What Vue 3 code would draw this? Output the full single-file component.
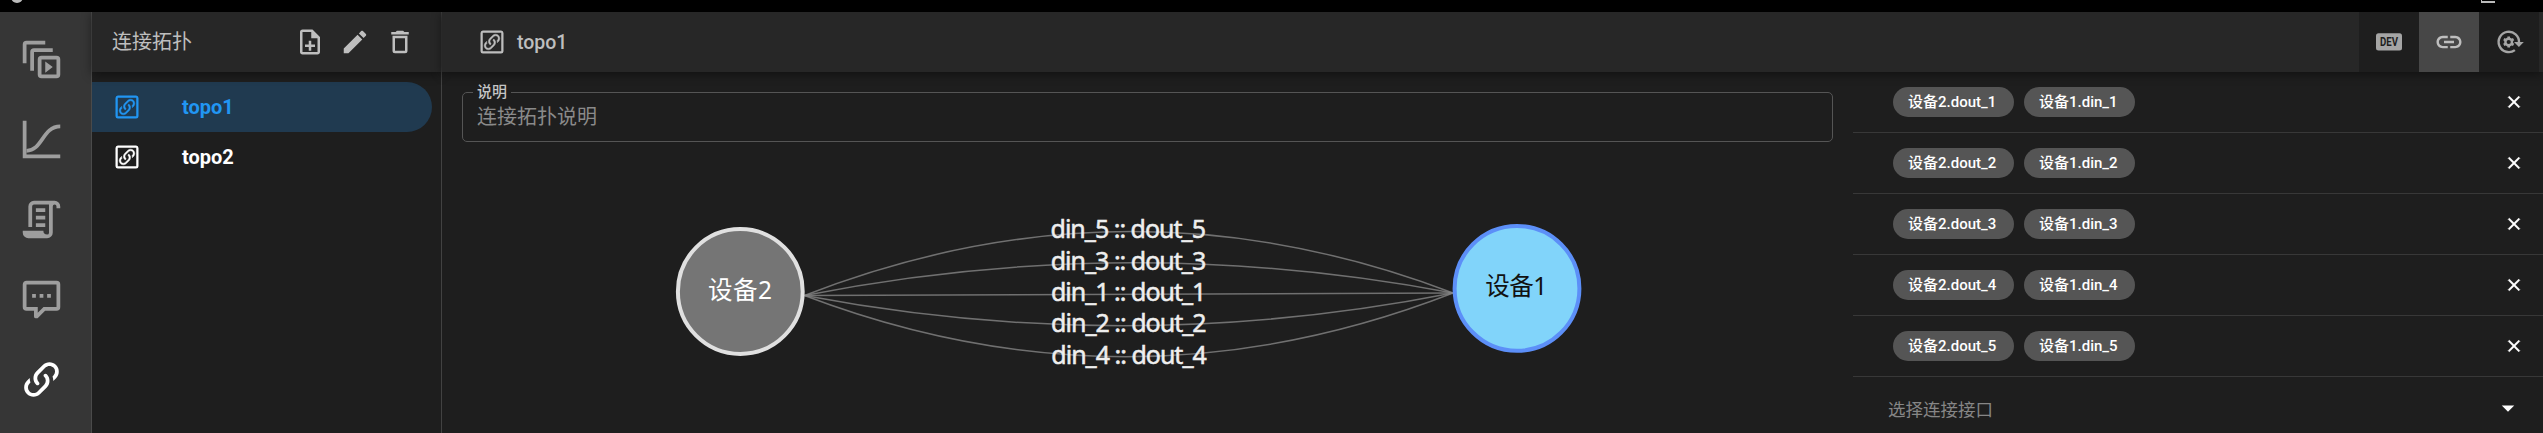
<script setup>
const link = 'M10.59,13.41C11,13.8 11,14.44 10.59,14.83C10.2,15.22 9.56,15.22 9.17,14.83C7.22,12.88 7.22,9.71 9.17,7.76V7.76L12.71,4.22C14.66,2.27 17.83,2.27 19.78,4.22C21.73,6.17 21.73,9.34 19.78,11.29L18.29,12.78C18.3,11.96 18.17,11.14 17.89,10.36L18.36,9.88C19.54,8.71 19.54,6.81 18.36,5.64C17.19,4.46 15.29,4.46 14.12,5.64L10.59,9.17C9.41,10.34 9.41,12.24 10.59,13.41M13.41,9.17C13.8,8.78 14.44,8.78 14.83,9.17C16.78,11.12 16.78,14.29 14.83,16.24V16.24L11.29,19.78C9.34,21.73 6.17,21.73 4.22,19.78C2.27,17.83 2.27,14.66 4.22,12.71L5.71,11.22C5.7,12.04 5.83,12.86 6.11,13.65L5.64,14.12C4.46,15.29 4.46,17.19 5.64,18.36C6.81,19.54 8.71,19.54 9.88,18.36L13.41,14.83C14.59,13.66 14.59,11.76 13.41,10.59C13,10.2 13,9.56 13.41,9.17Z'
const frame = 'M19.3 2.8H4.7A2 2 0 0 0 2.8 4.7V19.3A2 2 0 0 0 4.7 21.2H19.3A2 2 0 0 0 21.2 19.3V4.7A2 2 0 0 0 19.3 2.8M19.4 19.4H4.6V4.6H19.4Z'
const rail = [
  { d: 'M4 2A2 2 0 0 0 2 4V14H4V4H14V2M8 6A2 2 0 0 0 6 8V18H8V8H18V6M20 12V20H12V12H20M20 10H12A2 2 0 0 0 10 12V20A2 2 0 0 0 12 22H20A2 2 0 0 0 22 20V12A2 2 0 0 0 20 10M14 13V19L18 16L14 13Z' },
  { d: 'M2 2H4V20H22V22H2Z', curve: 'M4 18C12.5 18 12.5 5 22 5' },
  { d: 'M15,20A1,1 0 0,0 16,19V4H8A1,1 0 0,0 7,5V16H5V5A3,3 0 0,1 8,2H19A3,3 0 0,1 22,5V6H20V5A1,1 0 0,0 19,4A1,1 0 0,0 18,5V9L18,19A3,3 0 0,1 15,22H5A3,3 0 0,1 2,19V18H13A2,2 0 0,0 15,20M9,6H14V8H9V6M9,10H14V12H9V10M9,14H14V16H9V14Z' },
  { d: 'M9,22A1,1 0 0,1 8,21V18H4A2,2 0 0,1 2,16V4C2,2.89 2.9,2 4,2H20A2,2 0 0,1 22,4V16A2,2 0 0,1 20,18H13.9L10.2,21.71C10,21.9 9.75,22 9.5,22V22H9M10,16V19.08L13.08,16H20V4H4V16H10M17,11H15V9H17V11M13,11H11V9H13V11M9,11H7V9H9V11Z' },
  { d: link, active: true },
]
const actions = [
  'M13 11h-2v3H8v2h3v3h2v-3h3v-2h-3zm1-9H6c-1.1 0-2 .9-2 2v16c0 1.1.89 2 1.99 2H18c1.1 0 2-.9 2-2V8l-6-6zm4 18H6V4h7v5h5v11z',
  'M20.71,7.04C21.1,6.65 21.1,6 20.71,5.63L18.37,3.29C18,2.9 17.35,2.9 16.96,3.29L15.12,5.12L18.87,8.87M3,17.25V21H6.75L17.81,9.93L14.06,6.18L3,17.25Z',
  'M6,19A2,2 0 0,0 8,21H16A2,2 0 0,0 18,19V7H6V19M8,9H16V19H8V9M15.5,4L14.5,3H9.5L8.5,4H5V6H19V4H15.5Z',
]
const topos = [{ name: 'topo1', active: true }, { name: 'topo2' }]
const edges = [
  { n: 5, c: 169, y: 238.4, x: 0 },
  { n: 3, c: 231.5, y: 269.7, x: 0.2 },
  { n: 1, c: 294, y: 301, x: 0.4 },
  { n: 2, c: 357, y: 332.3, x: 0.6 },
  { n: 4, c: 419, y: 363.6, x: 0.8 },
]
</script>

<template>
  <div class="app">
    <div class="titlebar">
      <i class="logo"></i><i class="winbtn"></i>
    </div>
    <div class="main">
      <nav class="rail">
        <svg v-for="(r, i) in rail" :key="i" viewBox="0 0 24 24" :class="{ on: r.active }">
          <path :d="r.d" />
          <path v-if="r.curve" class="curve" :d="r.curve" />
        </svg>
      </nav>
      <aside class="side">
        <header class="bar side-bar">
          <span class="title">连接拓扑</span>
          <svg v-for="(a, i) in actions" :key="i" class="ic" viewBox="0 0 24 24"><path :d="a" /></svg>
        </header>
        <div class="list">
          <div v-for="t in topos" :key="t.name" class="item" :class="{ on: t.active }">
            <svg class="ic" viewBox="0 0 24 24"><path :d="frame" /><path class="inner" transform="translate(3.84 3.84) scale(.68)" :d="link" /></svg>
            <span>{{ t.name }}</span>
          </div>
        </div>
      </aside>
      <section class="content">
        <header class="bar top-bar">
          <svg class="ic" viewBox="0 0 24 24"><path :d="frame" /><path class="inner" transform="translate(3.84 3.84) scale(.68)" :d="link" /></svg>
          <span class="name">topo1</span>
          <div class="tabs">
            <div class="tab">
              <svg class="ic" viewBox="0 0 30 30">
                <rect x="2" y="6.2" width="26" height="17.2" rx="2.5" />
                <text class="dev" x="6" y="19" textLength="18" lengthAdjust="spacingAndGlyphs">DEV</text>
              </svg>
            </div>
            <div class="tab on">
              <svg class="ic" viewBox="0 0 24 24"><path d="M3.9 12c0-1.71 1.39-3.1 3.1-3.1h4V7H7c-2.76 0-5 2.24-5 5s2.24 5 5 5h4v-1.9H7c-1.71 0-3.1-1.39-3.1-3.1zM8 13h8v-2H8v2zm9-6h-4v1.9h4c1.71 0 3.1 1.39 3.1 3.1s-1.39 3.1-3.1 3.1h-4V17h4c2.76 0 5-2.24 5-5s-2.24-5-5-5z" /></svg>
            </div>
            <div class="tab">
              <svg class="ic" viewBox="0 0 30 30">
                <path class="ring" d="M20.9 23.1A10.2 10.2 0 1 1 25 15.5" />
                <path d="M20 15H29.8L24.9 20Z" />
                <circle class="gear" cx="14.7" cy="15" r="3.3" />
                <path class="teeth" d="M14.7 9.4V12M14.7 18V20.6M9.8 12.2L12.1 13.5M17.3 16.5L19.6 17.8M9.8 17.8L12.1 16.5M17.3 13.5L19.6 12.2" />
              </svg>
            </div>
          </div>
        </header>
        <div class="body">
          <div class="canvas">
            <fieldset class="field"><legend>说明</legend><span>连接拓扑说明</span></fieldset>
            <svg class="graph" viewBox="442 155 1411 278">
              <path v-for="e in edges" :key="e.n" class="edge" :d="`M804.5 295.5Q1128.7 ${e.c} 1453 293`" />
              <circle class="n2" cx="740.3" cy="291.5" r="62.4" />
              <circle class="n1" cx="1517" cy="288.4" r="62.4" />
              <text class="t2" x="708" y="298.6" textLength="64">设备2</text>
              <text class="t1" x="1485.2" y="295" textLength="62">设备1</text>
              <text v-for="e in edges" :key="e.n" class="lbl" :x="1050.5 + e.x" :y="e.y" textLength="155.5">din_{{ e.n }} :: dout_{{ e.n }}</text>
            </svg>
          </div>
          <div class="links">
            <div v-for="n in 5" :key="n" class="row">
              <span class="chip c1">设备2.dout_{{ n }}</span><span class="chip c2">设备1.din_{{ n }}</span>
              <svg class="x" viewBox="0 0 24 24"><path d="M19,6.41L17.59,5L12,10.59L6.41,5L5,6.41L10.59,12L5,17.59L6.41,19L12,13.41L17.59,19L19,17.59L13.41,12L19,6.41Z" /></svg>
            </div>
            <div class="select"><span>选择连接接口</span><svg viewBox="0 0 24 24"><path d="M7,10L12,15L17,10H7Z" /></svg></div>
          </div>
        </div>
      </section>
    </div>
  </div>
</template>

<style>
body { background: #1e1e1e; overflow: hidden; }
</style>
<style scoped>
* { box-sizing: border-box; }
.app { width: 2543px; height: 433px; overflow: hidden; display: flex; flex-direction: column; background: #1e1e1e; color: #fff; font-family: Roboto, "Noto Sans CJK SC", sans-serif; }
svg { display: block; flex: none; fill: currentColor; }
.titlebar { height: 12px; flex: none; background: #000; display: flex; justify-content: space-between; padding: 0 48px 0 11px; overflow: hidden; }
.logo { width: 12px; height: 12px; margin-top: -9px; border-radius: 50%; background: #bbb; }
.winbtn { width: 14px; height: 3px; border-left: 1px solid #bbb; border-bottom: 2px solid #bbb; }
.main { flex: 1; min-height: 0; display: flex; }
.rail { width: 92px; flex: none; background: #363636; border-right: 1px solid #4a4a4a; display: flex; flex-direction: column; align-items: center; gap: 35px; padding: 24.5px 8px 0 0; color: #9e9e9e; }
.rail svg { width: 45px; height: 45px; }
.rail .on { color: #fff; }
.curve { fill: none; stroke: currentColor; stroke-width: 2; }
.side { width: 350px; flex: none; border-right: 1px solid #424242; }
.bar { height: 60px; background: #272727; display: flex; align-items: center; color: #bebebe; box-shadow: 0 2px 10px rgba(0,0,0,.45); position: relative; }
.ic { width: 30px; height: 30px; }
.side-bar { padding: 0 26.5px 0 20px; gap: 15px; }
.title { font-size: 20px; flex: 1; line-height: 30px; }
.list { padding-top: 10px; }
.item { height: 50px; width: 340px; border-radius: 0 25px 25px 0; display: flex; align-items: center; padding-left: 20px; font-size: 20px; font-weight: 700; }
.item span { margin-left: 40px; }
.item.on { background: #203a50; color: #2196f3; }
.inner { stroke: currentColor; stroke-width: .5; }
.content { flex: 1; min-width: 0; display: flex; flex-direction: column; }
.top-bar { padding: 0 4px 0 35px; flex: none; }
.name { font-size: 19.5px; font-weight: 500; margin-left: 10px; }
.tabs { margin-left: auto; display: flex; height: 60px; }
.tab { width: 60px; background: #1e1e1e; display: flex; align-items: center; justify-content: center; color: #a5a5a5; }
.tab.on { background: #474747; color: #bebebe; }
.dev { font: 700 12px Roboto, sans-serif; fill: #1e1e1e; }
.ring { fill: none; stroke: currentColor; stroke-width: 2.4; }
.gear { fill: none; stroke: currentColor; stroke-width: 2.4; }
.teeth { stroke: currentColor; stroke-width: 2.6; }
.body { flex: 1; min-height: 0; display: flex; }
.canvas { width: 1411px; flex: none; display: flex; flex-direction: column; }
.field { height: 59px; margin: 11px 20px 0 20px; border: 1px solid #555; border-radius: 5px; padding: 0 0 0 10px; min-width: 0; }
.field legend { font-size: 15px; line-height: 18px; padding: 0 4px; color: #c5c5c5; font-weight: 500; }
.field span { display: block; font-size: 20px; line-height: 30px; margin: 1px 0 0 4px; color: #8a8a8a; }
.graph { width: 1411px; height: 278px; margin-top: 13px; }
.edge { fill: none; stroke: #848484; stroke-opacity: .8; stroke-width: 1.5; }
.n2 { fill: #757575; stroke: #e0e0e0; stroke-width: 4; }
.n1 { fill: #81d4fa; stroke: #5c8ff8; stroke-width: 4; }
.graph text { font: 25px "Noto Sans", "Noto Sans CJK SC", sans-serif; }
.graph .t2, .graph .t1 { font-size: 24.5px; }
.t2 { fill: #fff; }
.t1 { fill: #111; }
.lbl { fill: #eee; stroke: #eee; stroke-width: .5; }
.links { flex: 1; }
.row { height: 61px; display: flex; align-items: center; border-bottom: 1px solid #383838; padding: 0 19px 0 40px; }
.chip { height: 30px; border-radius: 15px; background: #555; font-size: 15px; font-weight: 500; line-height: 30px; padding: 0 15px; white-space: nowrap; margin-right: 10px; }
.c1 { width: 121px; }
.c2 { width: 111px; }
.x { width: 20px; height: 20px; margin-left: auto; stroke: currentColor; stroke-width: .7; }
.select { height: 62px; display: flex; align-items: center; justify-content: space-between; padding: 0 20px 0 35px; font-size: 17.5px; color: #868686; }
.select svg { width: 30px; height: 30px; color: #fff; }
</style>
